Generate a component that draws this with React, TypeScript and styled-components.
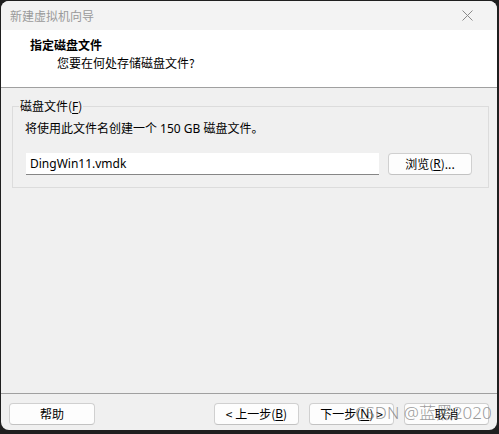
import React from "react";
import styled, { createGlobalStyle } from "styled-components";

const Global = createGlobalStyle`
  html, body {
    margin: 0;
    padding: 0;
    background: #1f1f1f;
    width: 499px;
    height: 434px;
    overflow: hidden;
  }
  * { box-sizing: border-box; }
  body {
    font-family: "Segoe UI", "Noto Sans", "Noto Sans CJK SC", sans-serif;
    font-size: 12px;
    color: #000;
  }
`;

const Window = styled.div`
  position: relative;
  margin: 1px 0 0 1px;
  width: 496px;
  height: 429px;
  border-radius: 8px;
  background: #f0f0f0;
  overflow: hidden;
  display: flex;
  flex-direction: column;
`;

const TitleBar = styled.div`
  height: 29px;
  flex: none;
  background: #f3f3f3;
  display: flex;
  align-items: center;
  justify-content: space-between;
  padding: 0 24px 0 9px;
`;

const TitleText = styled.span`
  color: #9a9a9a;
  font-size: 12px;
  line-height: 16px;
  font-family: "Noto Sans CJK SC", sans-serif;
`;

const CloseIcon = styled.svg`
  width: 11px;
  height: 11px;
  display: block;
`;

const Header = styled.div`
  height: 58px;
  flex: none;
  background: #ffffff;
  border-bottom: 1px solid #a0a0a0;
  padding: 7px 0 0 29px;
  display: flex;
  flex-direction: column;
  gap: 2px;
`;

const HeaderTitle = styled.div`
  font-weight: 700;
  font-size: 12px;
  line-height: 16px;
  font-family: "Noto Sans CJK SC", sans-serif;
`;

const HeaderSub = styled.div`
  padding-left: 27px;
  font-size: 12px;
  line-height: 16px;
  font-family: "Noto Sans CJK SC", sans-serif;
`;

const Body = styled.div`
  flex: 1;
  padding: 10px 8px 0 11px;
`;

const Group = styled.fieldset`
  margin: 0;
  padding: 0 16px 12px 12px;
  border: 1px solid #dcdcdc;
  min-width: 0;
`;

const Legend = styled.legend`
  margin-left: -6px;
  padding: 0 1px;
  font-size: 12px;
  line-height: 16px;
  font-family: "Noto Sans CJK SC", sans-serif;
`;

const Mn = styled.span`
  text-decoration: underline;
  text-underline-offset: 2px;
  font-family: "Segoe UI", "Noto Sans", sans-serif;
`;

const Info = styled.div`
  margin-top: 6px;
  line-height: 16px;
  font-family: "Noto Sans", "Noto Sans CJK SC", sans-serif;
`;

const FileRow = styled.div`
  margin-top: 16px;
  display: flex;
  align-items: flex-start;
  gap: 9px;
`;

const PathInput = styled.div`
  margin-left: 1px;
  width: 353px;
  height: 22px;
  background: #ffffff;
  border-bottom: 1px solid #868686;
  padding-left: 4px;
  display: flex;
  align-items: center;
  font-family: "Noto Sans", sans-serif;
  font-size: 12px;
`;

const Button = styled.button<{ $w?: number }>`
  width: ${(p) => p.$w ?? 85}px;
  height: 22px;
  padding: 0;
  background: #fdfdfd;
  border: 1px solid #d0d0d0;
  border-bottom-color: #c2c2c2;
  border-radius: 4px;
  font-family: "Noto Sans CJK SC", sans-serif;
  font-size: 12px;
  line-height: 16px;
  color: #000;
  display: flex;
  align-items: center;
  justify-content: center;
`;

const Footer = styled.div`
  flex: none;
  height: 37px;
  border-top: 1px solid #a0a0a0;
  padding: 9px 8px 0 8px;
  display: flex;
  align-items: flex-start;
`;

const Spacer = styled.div`
  flex: 1;
`;

const NavGroup = styled.div`
  display: flex;
  gap: 10px;
`;

const Watermark = styled.div`
  position: absolute;
  left: 354px;
  top: 401px;
  font-family: "Noto Sans", "Noto Sans CJK SC", sans-serif;
  font-size: 17px;
  font-weight: 300;
  line-height: 22px;
  color: rgba(120, 120, 120, 0.75);
  pointer-events: none;
  white-space: nowrap;
`;

export default function App() {
  return (
    <>
      <Global />
      <Window>
        <TitleBar>
          <TitleText>新建虚拟机向导</TitleText>
          <CloseIcon viewBox="0 0 11 11">
            <path d="M0.5 0.5 L10.5 10.5 M10.5 0.5 L0.5 10.5" stroke="#8a8a8a" strokeWidth="1" fill="none" />
          </CloseIcon>
        </TitleBar>
        <Header>
          <HeaderTitle>指定磁盘文件</HeaderTitle>
          <HeaderSub>您要在何处存储磁盘文件?</HeaderSub>
        </Header>
        <Body>
          <Group>
            <Legend>
              磁盘文件(<Mn>F</Mn>)
            </Legend>
            <Info>将使用此文件名创建一个 150 GB 磁盘文件。</Info>
            <FileRow>
              <PathInput>DingWin11.vmdk</PathInput>
              <Button $w={84}>
                浏览(<Mn>R</Mn>)...
              </Button>
            </FileRow>
          </Group>
        </Body>
        <Footer>
          <Button $w={86}>帮助</Button>
          <Spacer />
          <NavGroup>
            <Button>
              &lt; 上一步(<Mn>B</Mn>)
            </Button>
            <Button>
              下一步(<Mn>N</Mn>) &gt;
            </Button>
            <Button>取消</Button>
          </NavGroup>
        </Footer>
        <Watermark>CSDN @蓝黑2020</Watermark>
      </Window>
    </>
  );
}
